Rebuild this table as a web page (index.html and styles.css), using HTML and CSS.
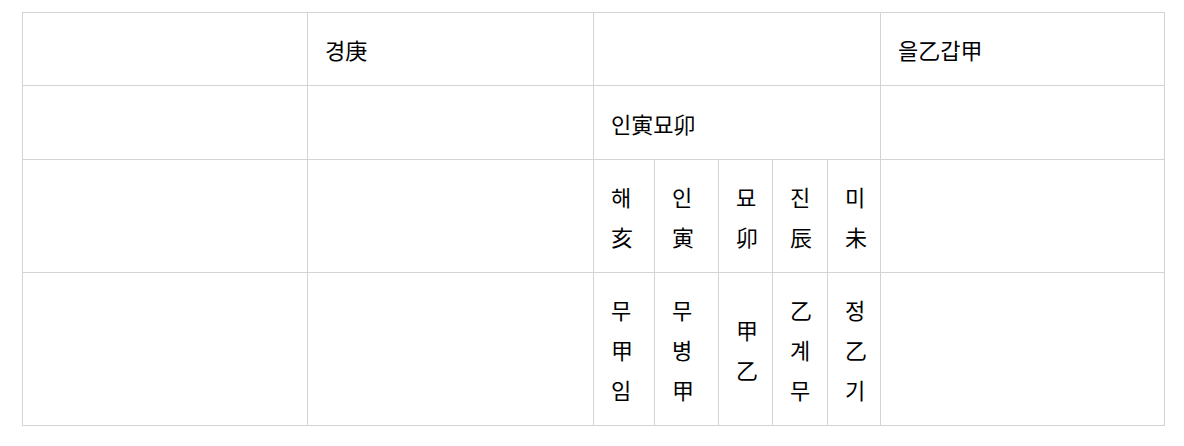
FILE: index.html
```html
<!DOCTYPE html>
<html lang="ko">
<head>
<meta charset="utf-8">
<title>Table</title>
<link rel="stylesheet" href="styles.css">
</head>
<body>
<table class="grid">
  <colgroup>
    <col class="c-a">
    <col class="c-b">
    <col class="c-s1">
    <col class="c-s2">
    <col class="c-s3">
    <col class="c-s4">
    <col class="c-s5">
    <col class="c-d">
  </colgroup>
  <tbody>
    <tr class="r1">
      <td></td>
      <td>경庚</td>
      <td colspan="5"></td>
      <td>을乙갑甲</td>
    </tr>
    <tr class="r2">
      <td></td>
      <td></td>
      <td colspan="5">인寅묘卯</td>
      <td></td>
    </tr>
    <tr class="r3">
      <td></td>
      <td></td>
      <td>해<br>亥</td>
      <td>인<br>寅</td>
      <td>묘<br>卯</td>
      <td>진<br>辰</td>
      <td>미<br>未</td>
      <td></td>
    </tr>
    <tr class="r4">
      <td></td>
      <td></td>
      <td>무<br>甲<br>임</td>
      <td>무<br>병<br>甲</td>
      <td>甲<br>乙</td>
      <td>乙<br>계<br>무</td>
      <td>정<br>乙<br>기</td>
      <td></td>
    </tr>
  </tbody>
</table>
</body>
</html>
```
FILE: styles.css
```css
html, body {
  margin: 0;
  padding: 0;
  background: #ffffff;
}

body {
  font-family: "Noto Sans CJK KR", "Noto Sans", sans-serif;
  color: #000000;
}

.grid {
  margin: 12px 0 0 22px;
  width: 1143px;
  table-layout: fixed;
  border-collapse: collapse;
}

.c-a { width: 285px; }
.c-b { width: 286px; }
.c-s1 { width: 61px; }
.c-s2 { width: 64px; }
.c-s3 { width: 54px; }
.c-s4 { width: 55px; }
.c-s5 { width: 53px; }
.c-d { width: 284px; }

.grid td {
  border: 1px solid #d3d3d3;
  padding: 0 0 0 17px;
  font-size: 22px;
  line-height: 40px;
  vertical-align: middle;
  text-align: left;
  white-space: nowrap;
  overflow: visible;
}

.r1 { height: 73px; }
.r2 { height: 74px; }
.r3 { height: 113px; }
.r4 { height: 153px; }
```
